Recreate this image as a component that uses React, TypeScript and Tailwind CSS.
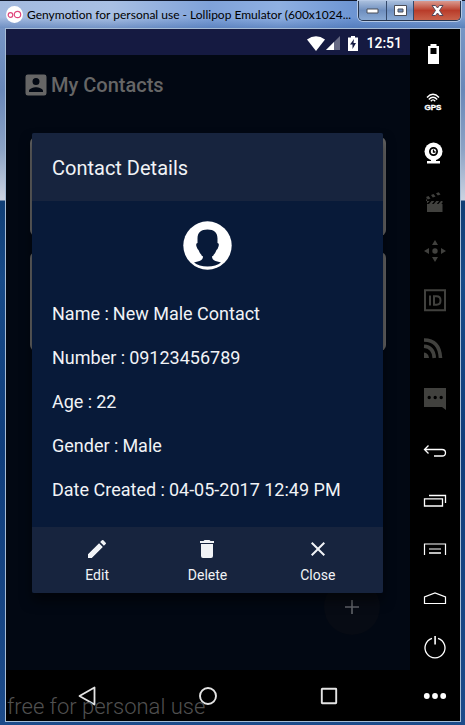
import type { ReactNode } from "react";

const details = [
  ["Name", "New Male Contact"],
  ["Number", "09123456789"],
  ["Age", "22"],
  ["Gender", "Male"],
  ["Date Created", "04-05-2017 12:49 PM"],
];

function Icon({ children, size = 24 }: { children: ReactNode; size?: number }) {
  return (
    <svg width={size} height={size} viewBox="0 0 24 24" fill="currentColor" aria-hidden="true" className="shrink-0">
      {children}
    </svg>
  );
}

const tools: { label: string; dim?: boolean; art: ReactNode }[] = [
  {
    label: "Battery",
    art: <path fillRule="evenodd" d="M7.500 2h6v2H16v18H5V4h2.500zM7.500 6v6h6V6z" />,
  },
  {
    label: "GPS",
    art: (
      <>
        <path d="M4 6.500Q10 0 16 6.500M5.800 8.500Q10 4 14.200 8.500M7.800 10.200Q10 7.500 12.200 10.200" fill="none" stroke="currentColor" strokeWidth="1.400" />
        <text x="10" y="19" textAnchor="middle" className="font-['Liberation_Sans',sans-serif] text-[8px] font-bold" stroke="currentColor" strokeWidth="0.400">GPS</text>
      </>
    ),
  },
  {
    label: "Camera",
    art: (
      <>
        <path d="M4 20h13v2.500H4zM8 17h5v4H8z" />
        <circle cx="10.500" cy="10.500" r="9" />
        <circle cx="10.500" cy="10.500" r="3.600" fill="#fff" stroke="#000" strokeWidth="1.800" />
        <path d="M10.500 8.500v2.500h2" fill="none" stroke="#000" strokeWidth="1.300" />
      </>
    ),
  },
  {
    label: "Capture",
    dim: true,
    art: (
      <path d="M4 14h15.500v8H4zM4 11h2.500L4 13.500zM8.500 11h2.800l-2.300 3H6zM13.300 11h2.800l-2.300 3h-3zM18 11h1.500v1.500L18.300 14h-2.800zM3 7l2.500-1 2 2.400-2.700 1zM8 5l2.500-1 2 2.400-2.700 1zM13 3.200l2.700-1L17.500 4.500l-2.700 1zM3 8l1.200 3H3z" />
    ),
  },
  {
    label: "Move",
    dim: true,
    art: (
      <>
        <circle cx="12" cy="12" r="2.700" />
        <path d="M12 1l3 5H9zM12 23l3-5H9zM1 12l5-3v6zM23 12l-5-3v6z" />
      </>
    ),
  },
  {
    label: "Identifiers",
    dim: true,
    art: (
      <>
        <path d="M2 1.300h20v20H2z" fill="none" stroke="currentColor" strokeWidth="2" />
        <path d="M7 6.500v10M11 7.300h2.500q4 0 4 4.200t-4 4.200H11z" fill="none" stroke="currentColor" strokeWidth="2" />
      </>
    ),
  },
  {
    label: "Network",
    dim: true,
    art: (
      <>
        <path d="M1 2q15.500 0 16.500 18M1 8.300q9.500.5 10.300 11.700" fill="none" stroke="currentColor" strokeWidth="3.600" />
        <path d="M1 14.500q4.500.5 5 5.500H1z" />
      </>
    ),
  },
  {
    label: "Messages",
    dim: true,
    art: (
      <>
        <path d="M1 0h22v22l-4-3H1z" />
        <path d="M4.500 9.500a1.700 1.700 0 1 0 3.400 0 1.700 1.700 0 0 0-3.400 0m6 0a1.700 1.700 0 1 0 3.400 0 1.700 1.700 0 0 0-3.400 0m6 0a1.700 1.700 0 1 0 3.400 0 1.700 1.700 0 0 0-3.400 0" fill="#000" />
      </>
    ),
  },
  {
    label: "Back",
    art: <path d="M5.500 8.500L1.500 12.500l4 4M2 12.500h17q3.500 0 3.500 3.300T19 19h-8" fill="none" stroke="currentColor" strokeWidth="1.300" />,
  },
  {
    label: "Recent apps",
    art: <path d="M6 8.500h16.500V16M1.500 11.800h18V19h-18z" fill="none" stroke="currentColor" strokeWidth="1.300" />,
  },
  {
    label: "Menu",
    art: (
      <>
        <path d="M1.500 19V8h21v11M6 13h12" fill="none" stroke="currentColor" strokeWidth="1.200" />
        <path d="M6 16h12v2H6z" opacity="0.750" />
      </>
    ),
  },
  {
    label: "Home",
    art: <path d="M1.500 18.500v-6.500L12 8l10.500 4v6.500z" fill="none" stroke="currentColor" strokeWidth="1.200" />,
  },
  {
    label: "Power",
    art: (
      <>
        <path d="M9 3.300a10 10 0 1 0 6 0" fill="none" stroke="currentColor" strokeWidth="1.300" />
        <path d="M11.300 1h1.600v8.500h-1.600z" />
      </>
    ),
  },
  {
    label: "More",
    art: (
      <>
        <circle cx="3.800" cy="12" r="2.900" />
        <circle cx="12" cy="12" r="2.900" />
        <circle cx="20.200" cy="12" r="2.900" />
      </>
    ),
  },
];

function TitleBar() {
  return (
    <header className="flex h-7 items-start border-t border-[#10182c] bg-[linear-gradient(180deg,#4f79b900_0,#4f79b900_60%,#3d66a780_100%),linear-gradient(90deg,#a3badf_0,#a9c0e4_24%,#7fa2d9_45%,#8fb0e2_60%,#6d95d3_76%,#7c9ed0_100%)] pl-1.5">
      <svg width="17" height="17" viewBox="0 0 17 17" className="mt-[5px] shrink-0" aria-hidden="true">
        <circle cx="8.500" cy="8.500" r="8.500" fill="#fff" />
        <circle cx="4.500" cy="9" r="2.300" fill="none" stroke="#e0467c" strokeWidth="1.200" />
        <circle cx="11.500" cy="8.500" r="3.200" fill="none" stroke="#e0467c" strokeWidth="1.200" />
      </svg>
      <h1 className="min-w-0 flex-1 overflow-hidden whitespace-nowrap pl-1 pt-1.5 font-[Lato,sans-serif] text-[12px] leading-4 text-black">
        Genymotion for personal use - Lollipop Emulator (600x1024...
      </h1>
      <div className="mr-1 flex h-5 shrink-0 overflow-hidden rounded-b-[5px] border border-t-0 border-[#27364f] shadow-[0_0_0_1px_#b5c9e6]">
        <button aria-label="Minimize" className="flex w-7 items-center justify-center border-r border-[#34496b] bg-linear-to-b from-[#a9bfdd] via-[#6f8fbf] to-[#8aaad4]">
          <svg width="13" height="6" viewBox="0 0 13 6"><path d="M1 1h11v4H1z" fill="#fff" stroke="#4b4e58" /></svg>
        </button>
        <button aria-label="Maximize" className="flex w-[27px] items-center justify-center border-r border-[#34496b] bg-linear-to-b from-[#a9bfdd] via-[#6f8fbf] to-[#8aaad4]">
          <svg width="13" height="11" viewBox="0 0 13 11"><path fillRule="evenodd" d="M.5.5h12v10H.5zM4 4v3h5V4z" fill="#fff" stroke="#4b4e58" /></svg>
        </button>
        <button aria-label="Close window" className="flex w-[46px] items-center justify-center bg-linear-to-b from-[#d99a90] via-[#b93c2a] to-[#c9624b]">
          <svg width="13" height="11" viewBox="0 0 13 11"><path d="M1 .5h3.500l2 2.500 2-2.500H12L8.500 5.500 12 10.500H8.500l-2-2.500-2 2.500H1l3.500-5z" fill="#fff" stroke="#53485a" /></svg>
        </button>
      </div>
    </header>
  );
}

function StatusBar() {
  return (
    <div className="flex h-[26px] shrink-0 items-center justify-end bg-[#151a41] pr-2 pt-0.5 text-white">
      <svg width="18" height="15" viewBox="0 0 18 15" aria-hidden="true"><path d="M0 3.500Q9-3 18 3.500L9 15z" fill="currentColor" /></svg>
      <svg width="14" height="14" viewBox="0 0 14 14" className="ml-px" aria-hidden="true">
        <path d="M0 14L14 0v14z" fill="#676a84" />
        <path d="M0 14l8-8v8z" fill="currentColor" />
      </svg>
      <svg width="10" height="15" viewBox="0 0 10 15" className="ml-2" aria-hidden="true">
        <path d="M3 0h4v1.500h3V15H0V1.500h3z" fill="currentColor" />
        <path d="M6 3L2 8.500h2.500V13L8 7H5.500z" fill="#151a41" />
      </svg>
      <time className="ml-2 text-[14px] font-medium leading-4">12:51</time>
    </div>
  );
}

function ContactDialog() {
  return (
    <section role="dialog" aria-labelledby="dialog-title" className="w-full overflow-hidden rounded-[2px] bg-[#081a39] text-[#f1f3f6] shadow-[0_8px_12px_#00000080]">
      <h2 id="dialog-title" className="bg-[#17243e] px-5 pb-[21px] pt-[23px] text-[20px] leading-6">Contact Details</h2>
      <div className="flex flex-col items-center px-5 pb-[25px] pt-5">
        <svg width="49" height="49" viewBox="0 0 49 49" role="img" aria-label="Contact photo">
          <circle cx="24.500" cy="24.500" r="24.200" fill="#fff" />
          <path d="M24.500 8.500C18 8.500 14.500 11.500 14.500 17.500V22q-2 .5-1 3.500t2 3.500q1.500 4.500 4.500 6.500 0 3-3.500 4.500l-5.500 1.500q5 4 13.500 4t13.500-4l-5.500-1.500q-3.500-1.500-3.500-4.500 3-2 4.500-6.500 1 0 2-3.500t-1-3.500v-4.500c0-6-3.500-9-10-9z" fill="#081a39" />
        </svg>
        <dl className="mt-8 flex w-full flex-col gap-5 text-[18px] leading-6">
          {details.map(([term, value]) => (
            <div key={term} className="flex gap-1 whitespace-nowrap">
              <dt>{term} :</dt>
              <dd>{value}</dd>
            </div>
          ))}
        </dl>
      </div>
      <footer className="grid grid-cols-3 bg-[#17243e] px-2.5 pb-2 pt-2.5 text-[14px] leading-5">
        <button className="flex flex-col items-center gap-1">
          <Icon><path d="M3 17.250V21h3.750L17.810 9.940l-3.750-3.750zM20.710 7.040a1 1 0 0 0 0-1.410l-2.340-2.340a1 1 0 0 0-1.410 0l-1.830 1.830 3.750 3.750z" /></Icon>
          Edit
        </button>
        <button className="flex flex-col items-center gap-1">
          <Icon><path d="M6 19a2 2 0 0 0 2 2h8a2 2 0 0 0 2-2V7H6zM19 4h-3.500l-1-1h-5l-1 1H5v2h14z" /></Icon>
          Delete
        </button>
        <button className="flex flex-col items-center gap-1">
          <Icon><path d="M19 6.410L17.590 5 12 10.590 6.410 5 5 6.410 10.590 12 5 17.590 6.410 19 12 13.410 17.590 19 19 17.590 13.410 12z" /></Icon>
          Close
        </button>
      </footer>
    </section>
  );
}

function Phone() {
  return (
    <main className="relative flex min-w-0 flex-1 flex-col bg-[#020813] font-[Roboto,sans-serif]">
      <StatusBar />
      <div className="relative flex flex-1 flex-col">
        <div className="flex h-[60px] items-center gap-px px-4 text-[#666]">
          <Icon size={28}><path d="M3 5v14a2 2 0 0 0 2 2h14a2 2 0 0 0 2-2V5a2 2 0 0 0-2-2H5a2 2 0 0 0-2 2zm12 4a3 3 0 1 1-6 0 3 3 0 0 1 6 0zm-9 8c0-2 4-3.100 6-3.100s6 1.100 6 3.100v1H6z" /></Icon>
          <h2 className="text-[20px] font-medium leading-6">My Contacts</h2>
        </div>
        <div className="flex flex-col gap-4 px-6 pt-[22px]">
          <div className="h-[99px] rounded-[6px] bg-[#666]" />
          <div className="h-[99px] rounded-[6px] bg-[#666]" />
        </div>
        <button aria-label="Add contact" className="absolute bottom-[35px] right-[30px] flex size-14 items-center justify-center rounded-full bg-[#070b14] text-[#606369]">
          <Icon><path d="M19 12.800h-6.200V19h-1.600v-6.200H5v-1.600h6.200V5h1.600v6.200H19z" /></Icon>
        </button>
        <div className="absolute inset-0 flex items-center pl-[26px] pr-[27px]">
          <ContactDialog />
        </div>
      </div>
      <nav className="flex h-[51px] shrink-0 items-center bg-black px-5 text-[#e4e4e4]">
        <button aria-label="Back" className="flex flex-1 justify-center">
          <Icon><path d="M19.500 3.500v17L4.500 12z" fill="none" stroke="currentColor" strokeWidth="1.800" strokeLinejoin="round" /></Icon>
        </button>
        <button aria-label="Home" className="flex flex-1 justify-center">
          <Icon><circle cx="12" cy="12" r="8" fill="none" stroke="currentColor" strokeWidth="1.900" /></Icon>
        </button>
        <button aria-label="Overview" className="flex flex-1 justify-center">
          <Icon><rect x="4.800" y="4.800" width="14.400" height="14.400" rx="0.500" fill="none" stroke="currentColor" strokeWidth="1.900" /></Icon>
        </button>
      </nav>
      <p className="pointer-events-none absolute bottom-0 left-0 whitespace-nowrap pl-px text-[22px] font-light leading-7 text-[#505050]">free for personal use</p>
    </main>
  );
}

export default function App() {
  return (
    <div className="flex min-h-screen flex-col bg-[linear-gradient(180deg,#7e9ccb_0,#6887b8_90px,#8ca3c5_150px,#ccd3e1_200px,#103e75_201px,#174a88_280px,#0f3d7b_450px,#1c4b8a_100%)]">
      <TitleBar />
      <div className="mb-[3px] ml-[5px] mr-1 flex flex-1 border border-[#a6bcd5]">
        <Phone />
        <aside aria-label="Emulator tools" className="flex w-[50px] shrink-0 flex-col bg-black">
          {tools.map(({ label, dim, art }) => (
            <button key={label} aria-label={label} className={`flex flex-1 items-center justify-center ${dim ? "text-[#41413e]" : "text-white"}`}>
              <Icon>{art}</Icon>
            </button>
          ))}
        </aside>
      </div>
    </div>
  );
}
